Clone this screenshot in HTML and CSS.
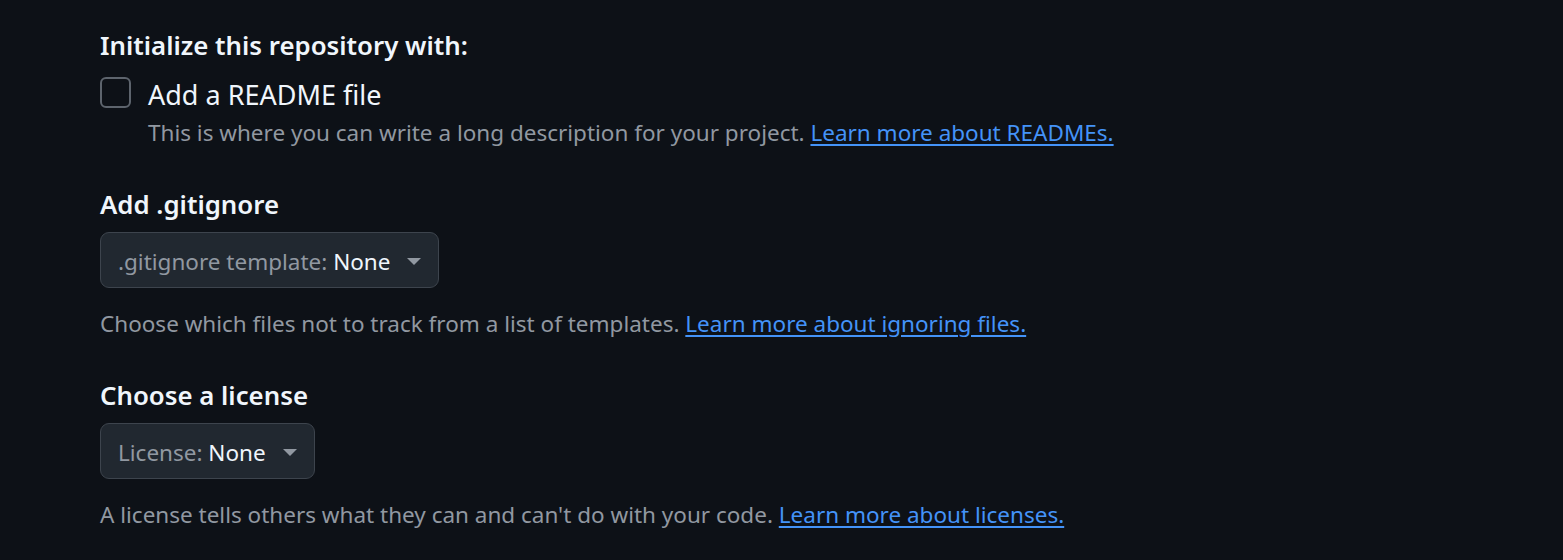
FILE: index.html
```html
<!DOCTYPE html>
<html lang="en">
<head>
<meta charset="utf-8">
<title>Initialize repository</title>
<link rel="stylesheet" href="styles.css">
</head>
<body>
<main class="page">
  <h2 class="heading">Initialize this repository with:</h2>
  <label class="check-row">
    <span class="checkbox"></span>
    <span class="check-label">Add a README file</span>
  </label>
  <p class="note note-indent">This is where you can write a long description for your project. <a href="#" class="link">Learn more about READMEs.</a></p>

  <h2 class="heading heading-gap">Add .gitignore</h2>
  <button class="select-btn" type="button">
    <span class="select-text"><span class="muted">.gitignore template:</span> None</span>
    <svg class="caret" width="14" height="7" viewBox="0 0 14 7"><path d="M0 0h14L7 7z" fill="#9198a1"/></svg>
  </button>
  <p class="note help">Choose which files not to track from a list of templates. <a href="#" class="link">Learn more about ignoring files.</a></p>

  <h2 class="heading heading-gap">Choose a license</h2>
  <button class="select-btn" type="button">
    <span class="select-text"><span class="muted">License:</span> None</span>
    <svg class="caret" width="14" height="7" viewBox="0 0 14 7"><path d="M0 0h14L7 7z" fill="#9198a1"/></svg>
  </button>
  <p class="note help">A license tells others what they can and can't do with your code. <a href="#" class="link">Learn more about licenses.</a></p>
</main>
</body>
</html>
```

FILE: styles.css
```css
html, body {
  margin: 0;
  padding: 0;
  background: #0d1117;
}
body {
  font-family: "Noto Sans", "Open Sans", sans-serif;
  color: #f0f6fc;
}
.page {
  padding: 27px 0 0 100px;
  display: flex;
  flex-direction: column;
  align-items: flex-start;
}
.heading {
  margin: 0;
  font-size: 25.8px;
  font-weight: 600;
  line-height: 36px;
  color: #f0f6fc;
}
.heading-gap {
  margin-top: 38px;
}
.check-row {
  margin-top: 14px;
  display: flex;
  align-items: flex-start;
  gap: 17px;
  cursor: pointer;
}
.checkbox {
  width: 31px;
  height: 31px;
  box-sizing: border-box;
  border: 2px solid #5d646d;
  border-radius: 6px;
  background: #0d1117;
  flex: none;
}
.check-label {
  font-size: 27px;
  line-height: 36px;
  color: #f0f6fc;
}
.note {
  margin: 0;
  font-size: 22.5px;
  line-height: 30px;
  color: #9198a1;
}
.note-indent {
  margin-top: 5px;
  margin-left: 48px;
}
.help {
  margin-top: 21px;
}
.link {
  color: #4493f8;
  text-decoration: underline;
  text-underline-offset: 3px;
}
.select-btn {
  margin-top: 10px;
  height: 56px;
  box-sizing: border-box;
  display: flex;
  align-items: center;
  gap: 17px;
  padding: 0 17px;
  background: #212830;
  border: 1.5px solid #3d444d;
  border-radius: 9px;
  font-family: inherit;
  font-size: 22.5px;
  color: #f0f6fc;
  cursor: pointer;
}
.select-text {
  line-height: 30px;
  padding-top: 4px;
}
.muted {
  color: #9198a1;
}
.caret {
  display: block;
  flex: none;
  margin-top: 2px;
}
```
